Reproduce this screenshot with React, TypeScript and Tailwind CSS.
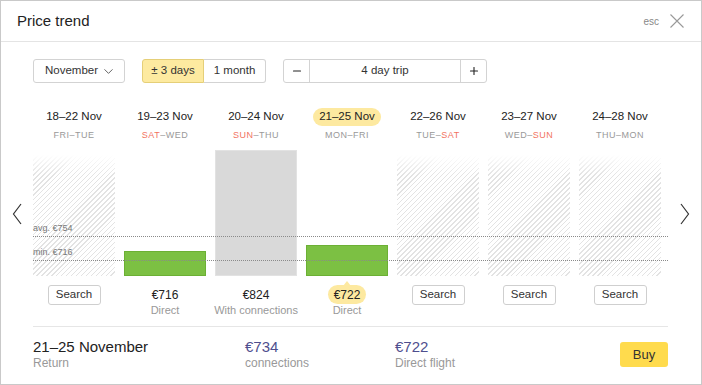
import { ChevronDown, Minus, Plus } from 'lucide-react';

type Day = {
  dates: string;
  from: string;
  to: string;
  fromRed?: boolean;
  toRed?: boolean;
  bar?: { h: string; kind: 'green' | 'gray' };
  price?: string;
  note?: string;
  selected?: boolean;
};

const days: Day[] = [
  { dates: '18–22 Nov', from: 'FRI', to: 'TUE' },
  { dates: '19–23 Nov', from: 'SAT', to: 'WED', fromRed: true, bar: { h: 'h-[25px]', kind: 'green' }, price: '€716', note: 'Direct' },
  { dates: '20–24 Nov', from: 'SUN', to: 'THU', fromRed: true, bar: { h: 'h-[126px]', kind: 'gray' }, price: '€824', note: 'With connections' },
  { dates: '21–25 Nov', from: 'MON', to: 'FRI', bar: { h: 'h-[31px]', kind: 'green' }, price: '€722', note: 'Direct', selected: true },
  { dates: '22–26 Nov', from: 'TUE', to: 'SAT', toRed: true },
  { dates: '23–27 Nov', from: 'WED', to: 'SUN', toRed: true },
  { dates: '24–28 Nov', from: 'THU', to: 'MON' },
];

const hatch =
  'bg-[repeating-linear-gradient(135deg,#e3e3e3_0_1px,transparent_1px_3.5px)] [mask-image:linear-gradient(to_bottom,transparent,black_20px)]';

function Arrow({ dir }: { dir: 'left' | 'right' }) {
  return (
    <svg width="10" height="22" viewBox="0 0 10 22" fill="none" stroke="#333" strokeWidth="1.2">
      {dir === 'left' ? <path d="M9 1 L1.5 11 L9 21" /> : <path d="M1 1 L8.5 11 L1 21" />}
    </svg>
  );
}

export default function App() {
  return (
    <div className="w-[702px] h-[385px] border border-[#c9c9c9] bg-white text-[#222] font-['Liberation_Sans',Arial,sans-serif] flex flex-col overflow-hidden">
      {/* Header */}
      <div className="h-[41px] shrink-0 border-b border-[#e4e4e4] flex items-center justify-between pl-4 pr-[17px]">
        <div className="text-[15px] leading-none -mt-[1px]">Price trend</div>
        <div className="flex items-center gap-[11px]">
          <span className="text-[10px] text-[#888]">esc</span>
          <svg width="14" height="14" viewBox="0 0 14 14" stroke="#999" strokeWidth="1.1" fill="none">
            <path d="M0.5 0.5 L13.5 13.5 M13.5 0.5 L0.5 13.5" />
          </svg>
        </div>
      </div>

      <div className="flex flex-1">
        <div className="w-[32px] flex items-center justify-center pt-[2px]">
          <Arrow dir="left" />
        </div>

        <div className="w-[635px] flex flex-col">
          {/* Controls */}
          <div className="flex items-center mt-[17px] h-[24px] text-[11.5px]">
            <button className="w-[92px] h-[24px] border border-[#d3d3d3] rounded-[3px] flex items-center justify-between pl-[11px] pr-[8px] text-[#333]">
              November
              <ChevronDown size={15} strokeWidth={1.2} />
            </button>
            <div className="ml-[17px] flex h-[24px]">
              <button className="w-[62px] bg-[#fdeaa0] border border-[#e5cf78] rounded-l-[3px] text-[#333]">± 3 days</button>
              <button className="w-[62px] border border-l-0 border-[#d3d3d3] rounded-r-[3px] text-[#333]">1 month</button>
            </div>
            <div className="ml-[17px] flex h-[24px] w-[204px] border border-[#d3d3d3] rounded-[3px]">
              <button className="w-[26px] flex items-center justify-center border-r border-[#d3d3d3]">
                <Minus size={12} strokeWidth={2.2} />
              </button>
              <div className="flex-1 flex items-center justify-center text-[#333]">4 day trip</div>
              <button className="w-[26px] flex items-center justify-center border-l border-[#d3d3d3]">
                <Plus size={12} strokeWidth={2.2} />
              </button>
            </div>
          </div>

          {/* Date labels */}
          <div className="flex gap-[9px] mt-[25px]">
            {days.map((d) => (
              <div key={d.dates} className="w-[82px] flex flex-col items-center">
                <div
                  className={`h-[18px] px-[6px] flex items-center text-[11.5px] leading-none rounded-full ${
                    d.selected ? 'bg-[#fde9a0]' : ''
                  }`}
                >
                  {d.dates}
                </div>
                <div className="mt-[3px] text-[9px] tracking-[0.5px] text-[#999] leading-[13px]">
                  <span className={d.fromRed ? 'text-[#f2735f]' : ''}>{d.from}</span>–
                  <span className={d.toRed ? 'text-[#f2735f]' : ''}>{d.to}</span>
                </div>
              </div>
            ))}
          </div>

          {/* Chart */}
          <div className="relative h-[126px] mt-[8px]">
            <div className="flex gap-[9px] h-full items-end">
              {days.map((d) => (
                <div key={d.dates} className="w-[82px] h-full flex items-end">
                  {d.bar ? (
                    <div
                      className={`w-full ${d.bar.h} ${
                        d.bar.kind === 'green'
                          ? 'bg-[#7cc043] border border-[#6cb034]'
                          : 'bg-[#d9d9d9] border border-[#e2e2e2]'
                      }`}
                    />
                  ) : (
                    <div className={`w-full h-[121px] ${hatch}`} />
                  )}
                </div>
              ))}
            </div>
            <div className="absolute left-0 right-0 top-[86px] border-t border-dotted border-[#8a8a8a]" />
            <div className="absolute left-0 right-0 top-[110px] border-t border-dotted border-[#8a8a8a]" />
            <div className="absolute left-0 top-[74px] text-[9px] text-[#777] leading-none">avg. €754</div>
            <div className="absolute left-0 top-[98px] text-[9px] text-[#777] leading-none">min. €716</div>
          </div>

          {/* Prices */}
          <div className="flex gap-[9px] mt-[9px] h-[40px]">
            {days.map((d) => (
              <div key={d.dates} className="w-[82px] flex flex-col items-center">
                {d.price ? (
                  <>
                    {d.selected ? (
                      <div className="relative h-[19px] px-[6px] flex items-center rounded-full bg-[#fde9a0] text-[12px]">
                        <span className="absolute -top-[4px] left-1/2 -translate-x-1/2 w-0 h-0 border-x-[4px] border-x-transparent border-b-[5px] border-b-[#fde9a0]" />
                        {d.price}
                      </div>
                    ) : (
                      <div className="h-[19px] flex items-center text-[12px]">{d.price}</div>
                    )}
                    <div className="text-[11px] text-[#999] whitespace-nowrap leading-[13px]">{d.note}</div>
                  </>
                ) : (
                  <button className="w-[53px] h-[20px] border border-[#cfcfcf] rounded-[3px] text-[11.5px] text-[#333] leading-none">
                    Search
                  </button>
                )}
              </div>
            ))}
          </div>

          {/* Summary */}
          <div className="mt-[1px] border-t border-[#e6e6e6] flex items-center pt-[11px]">
            <div className="w-[212px]">
              <div className="text-[15px] leading-[18px]">21–25 November</div>
              <div className="text-[12px] text-[#999] leading-[15px]">Return</div>
            </div>
            <div className="w-[150px]">
              <div className="text-[15px] leading-[18px] text-[#4e4e8e]">€734</div>
              <div className="text-[12px] text-[#999] leading-[15px]">connections</div>
            </div>
            <div className="flex-1">
              <div className="text-[15px] leading-[18px] text-[#4e4e8e]">€722</div>
              <div className="text-[12px] text-[#999] leading-[15px]">Direct flight</div>
            </div>
            <button className="w-[48px] h-[25px] rounded-[3px] bg-[#ffdb4d] text-[13px] text-[#333]">Buy</button>
          </div>
        </div>

        <div className="flex-1 flex items-center justify-center pt-[2px]">
          <Arrow dir="right" />
        </div>
      </div>
    </div>
  );
}
